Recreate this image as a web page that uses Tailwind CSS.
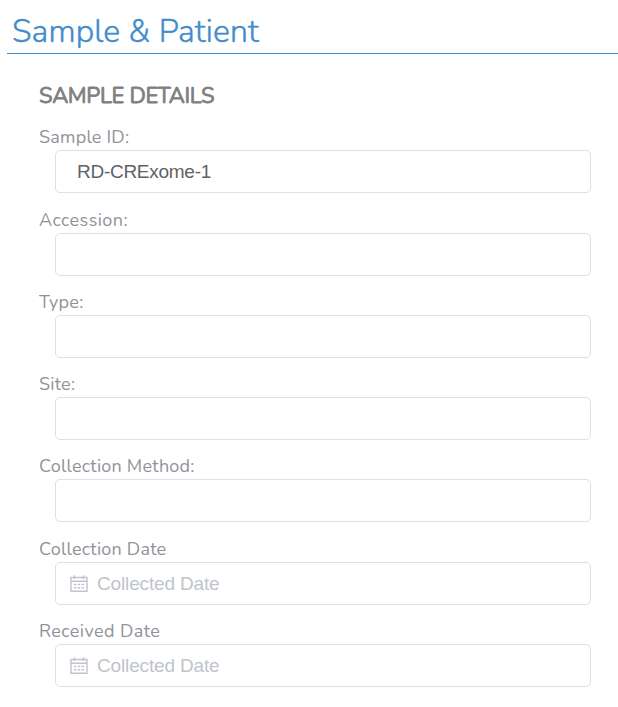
<!DOCTYPE html>
<html lang="en">
<head>
<meta charset="utf-8">
<title>Sample &amp; Patient</title>
<script src="https://cdn.jsdelivr.net/npm/@tailwindcss/browser@4"></script>
</head>
<body class="bg-white overflow-hidden h-[707px] font-['Nunito','Open_Sans',sans-serif]">
<svg class="hidden">
  <symbol id="calendar" viewBox="0 0 18 18">
    <g fill="none" stroke="currentColor" stroke-width="1.4">
      <path d="M1 2.5h16v13.8H1zM1 6.2h16M4.5 .3v3.7M13.5 .3v3.7"/>
      <path d="M4 9.5h2.5M7.8 9.5h2.5M11.6 9.5h2.5M4 12.8h2.5M7.8 12.8h2.5M11.6 12.8h2.5"/>
    </g>
  </symbol>
</svg>
<header class="ml-[7px] h-[54px] border-b border-[#428bca] pl-[5px] pt-[11px]">
  <h1 class="text-[32px] leading-[42px] font-light tracking-[0.15px] [-webkit-text-stroke:0.4px_#428bca] text-[#428bca] whitespace-nowrap">Sample &amp; Patient</h1>
</header>
<main class="pl-[39px] pr-[27px] pt-[28px]">
  <h2 class="text-[22px] leading-[28px] font-normal tracking-[-0.33px] [-webkit-text-stroke:0.8px_#7f7f7f] text-[#7f7f7f] whitespace-nowrap">SAMPLE DETAILS</h2>
  <form class="pt-[14px] grid grid-rows-[83px_82px_82px_82px_83px_82px] text-[18px] text-[#909399]">
    <div><label class="block h-[26px] leading-[26px] tracking-[0.22px]">Sample ID:</label>
      <div class="ml-4 h-[43px] rounded-[5px] border border-[#dcdfe6] flex items-center pl-[21px] pt-px font-['Liberation_Sans',sans-serif] text-[19px] tracking-[-0.27px] text-[#606266]">RD-CRExome-1</div></div>
    <div><label class="block h-[26px] leading-[26px] tracking-[0.42px]">Accession:</label>
      <div class="ml-4 h-[43px] rounded-[5px] border border-[#dcdfe6]"></div></div>
    <div><label class="block h-[26px] leading-[26px] tracking-[0.35px]">Type:</label>
      <div class="ml-4 h-[43px] rounded-[5px] border border-[#dcdfe6]"></div></div>
    <div><label class="block h-[26px] leading-[26px] tracking-[0.22px]">Site:</label>
      <div class="ml-4 h-[43px] rounded-[5px] border border-[#dcdfe6]"></div></div>
    <div><label class="block h-[26px] leading-[26px] tracking-[0.22px]">Collection Method:</label>
      <div class="ml-4 h-[43px] rounded-[5px] border border-[#dcdfe6]"></div></div>
    <div><label class="block h-[26px] leading-[26px] tracking-[0.22px]">Collection Date</label>
      <div class="ml-4 h-[43px] rounded-[5px] border border-[#dcdfe6] flex items-center pl-[14px] gap-[9px] font-['Liberation_Sans',sans-serif] text-[19px] tracking-[-0.15px] text-[#c0c4cc]"><svg class="size-[18px]"><use href="#calendar"/></svg><span class="pt-px">Collected Date</span></div></div>
    <div><label class="block h-[26px] leading-[26px] tracking-[0.42px]">Received Date</label>
      <div class="ml-4 h-[43px] rounded-[5px] border border-[#dcdfe6] flex items-center pl-[14px] gap-[9px] font-['Liberation_Sans',sans-serif] text-[19px] tracking-[-0.15px] text-[#c0c4cc]"><svg class="size-[18px]"><use href="#calendar"/></svg><span class="pt-px">Collected Date</span></div></div>
  </form>
</main>
</body>
</html>
